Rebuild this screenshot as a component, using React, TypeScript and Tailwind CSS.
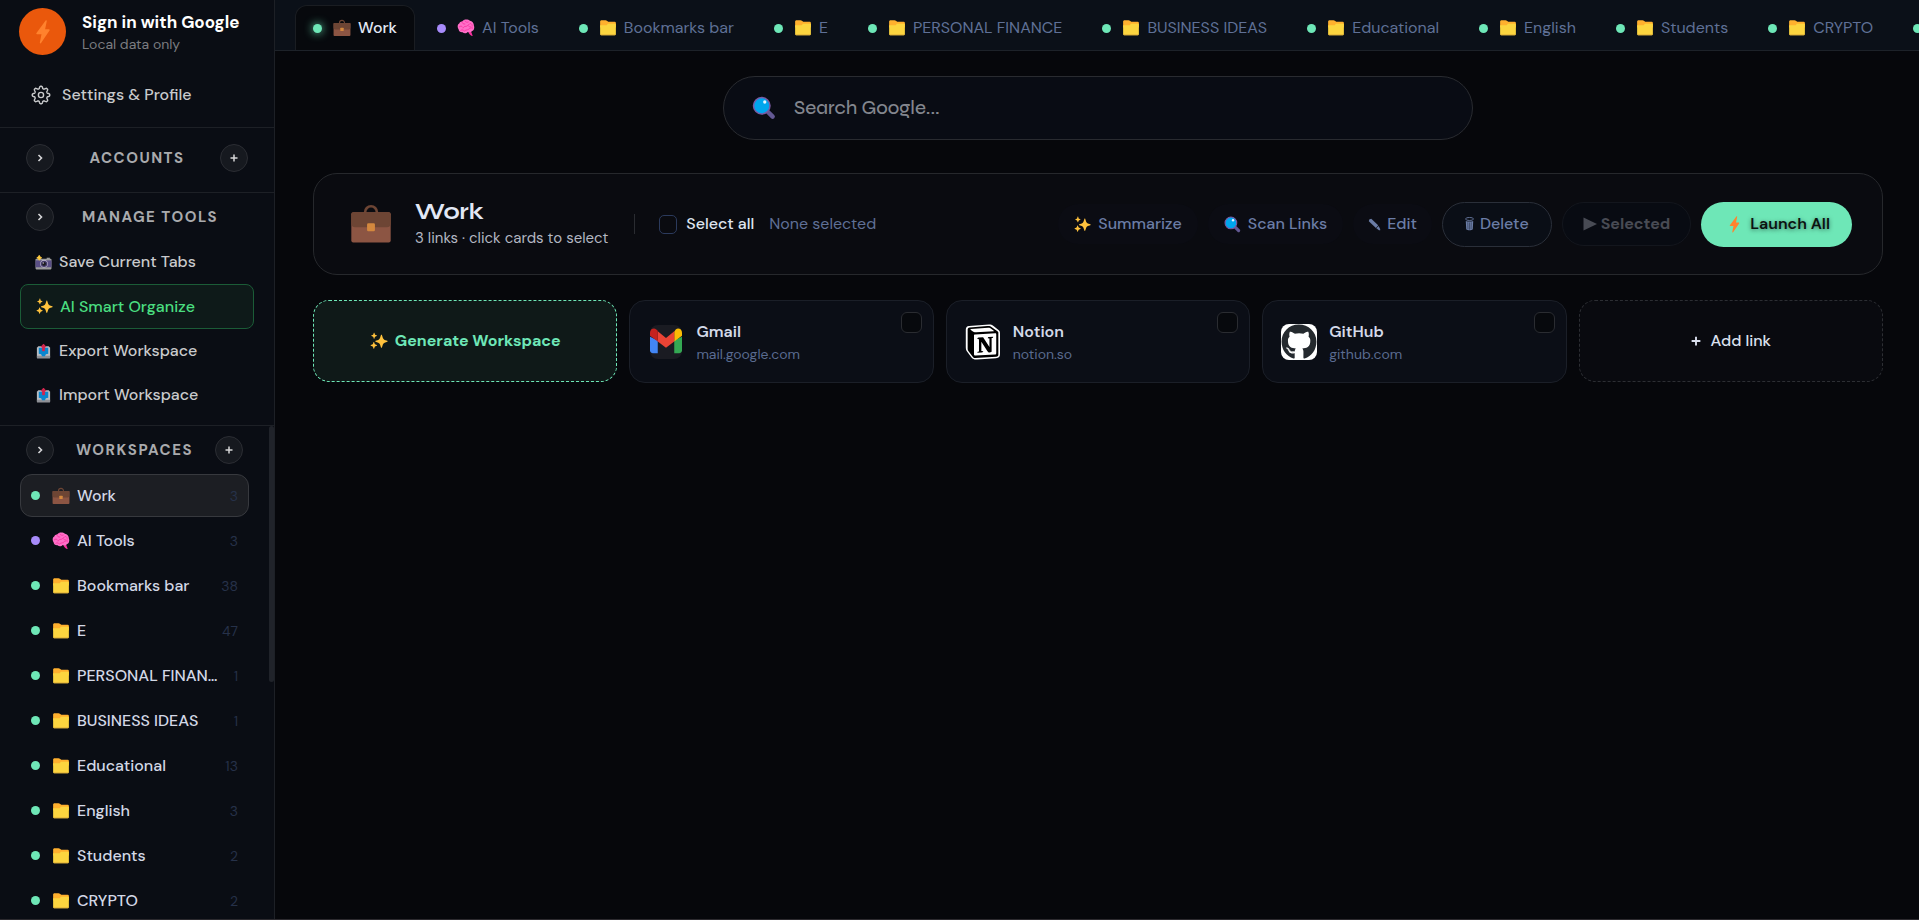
import { useState } from 'react';
import type { ReactNode } from 'react';
import { FaGithub } from 'react-icons/fa';
import { SiNotion } from 'react-icons/si';

interface IconProps {
  className?: string;
}

interface Workspace {
  id: string;
  name: string;
  count: number;
  icon: 'work' | 'brain' | 'folder';
  color?: 'violet';
}

const workspaces: Workspace[] = [
  { id: 'work', name: 'Work', count: 3, icon: 'work' },
  { id: 'ai', name: 'AI Tools', count: 3, icon: 'brain', color: 'violet' },
  { id: 'bookmarks', name: 'Bookmarks bar', count: 38, icon: 'folder' },
  { id: 'e', name: 'E', count: 47, icon: 'folder' },
  { id: 'finance', name: 'PERSONAL FINANCE', count: 1, icon: 'folder' },
  { id: 'business', name: 'BUSINESS IDEAS', count: 1, icon: 'folder' },
  { id: 'educational', name: 'Educational', count: 13, icon: 'folder' },
  { id: 'english', name: 'English', count: 3, icon: 'folder' },
  { id: 'students', name: 'Students', count: 2, icon: 'folder' },
  { id: 'crypto', name: 'CRYPTO', count: 2, icon: 'folder' },
  { id: 'news', name: 'News', count: 4, icon: 'folder' },
];

// Outline of an eight-toothed gear, sampled around the centre of a 20x20 box
const gearPath =
  Array.from({ length: 96 }, (_, i) => {
    const a = (i / 96) * Math.PI * 2;
    const r = 7.6 + 1.2 * Math.tanh(1.8 * Math.cos(a * 8));
    return `${i ? 'L' : 'M'}${(10 + r * Math.sin(a)).toFixed(2)} ${(10 - r * Math.cos(a)).toFixed(2)}`;
  }).join('') + 'Z';

const GearIcon = ({ className }: IconProps) => (
  <svg viewBox="0 0 20 20" className={className} fill="none" stroke="currentColor" strokeWidth="1.4" strokeLinejoin="round" aria-hidden="true">
    <path d={gearPath} />
    <circle cx="10" cy="10" r="2.6" />
  </svg>
);

const FolderIcon = ({ className }: IconProps) => (
  <svg viewBox="0 0 32 32" className={className} aria-hidden="true">
    <path d="M2 4.5C2 3.1 3.1 2 4.5 2h7.2c.9 0 1.7.3 2.3.9L16.5 5H28a2 2 0 0 1 2 2v8H2z" fill="#ffb02e" />
    <path d="M16 8.5 13.5 11H2v16a2 2 0 0 0 2 2h24a2 2 0 0 0 2-2V8.5z" fill="#fcd53f" />
    <path d="M2 27.5c.4.9 1.2 1.5 2 1.5h24c.9 0 1.7-.6 2-1.5z" fill="#d8a63a" />
  </svg>
);

const BriefcaseIcon = ({ className }: IconProps) => (
  <svg viewBox="0 0 32 32" className={className} aria-hidden="true">
    <path d="M11.5 7.5V7a4.5 4.5 0 0 1 9 0v.5" fill="none" stroke="#6d4534" strokeWidth="2" />
    <rect x="1" y="7" width="30" height="23" rx="1.5" fill="#8c5543" />
    <path d="M1 8.5C1 7.7 1.7 7 2.5 7h27c.8 0 1.5.7 1.5 1.5v7a3 3 0 0 1-3 3H4a3 3 0 0 1-3-3z" fill="#6d4534" />
    <rect x="13" y="15.5" width="6" height="6" rx="1" fill="#d3883e" />
  </svg>
);

const BrainIcon = ({ className }: IconProps) => (
  <svg viewBox="0 0 32 32" className={className} aria-hidden="true">
    <path d="M20 22h5l3 8c-3.5 0-6.5-3-8-8z" fill="#f92f9e" />
    <path d="M9 4.5C12-.5 20 0 23 3c4 .5 7.5 5 7 9 1.5 3 .5 8-3 9.500-2 2.5-6 2.5-8 1.5-2 3-7 3-9 .5-4 .5-7-2-7-5C0 15 1 9 4 8c.5-2 2.5-3.5 5-3.5z" fill="#ff6fc8" />
    <path d="M9 5c0 3 2.5 4.5 5 4M14 3.5c1 2 3.5 3 6 2M22 9c-3 1-3 4-6 4s-4 1-5 3M4 14c2-2.5 5-1.5 6 .5M24 8c2.5.5 3.5 2.5 3 5M28 16c-2-1-5 0-7 2-2.5 2-6 1-8 3.5M7 20c1.5-1 3-1 4.5 0M20 12c1 1.5 2 2 4 2" fill="none" stroke="#f92f9e" strokeWidth="1.4" strokeLinecap="round" />
  </svg>
);

const SparklesIcon = ({ className }: IconProps) => (
  <svg viewBox="0 0 32 32" className={className} aria-hidden="true">
    <g fill="#ffc23d">
      <path d="M19.5 5.5c.3-.9 1.4-.9 1.7 0l1.7 5.3a5 5 0 0 0 3.1 3.2l4.7 1.6c.9.3.9 1.5 0 1.8L26 19a5 5 0 0 0-3.1 3.2l-1.7 5.3c-.3.9-1.4.9-1.7 0l-1.7-5.3a5 5 0 0 0-3.1-3.2L10 17.4c-.9-.3-.9-1.5 0-1.8l4.7-1.6a5 5 0 0 0 3.1-3.2z" />
      <path d="M6.7 1.6c.2-.6 1-.6 1.2 0l.8 2.4a2 2 0 0 0 1.2 1.2l2 .7c.6.2.6 1 0 1.2l-2 .7A2 2 0 0 0 8.7 9l-.8 2.4c-.2.6-1 .6-1.2 0L5.9 9a2 2 0 0 0-1.2-1.2l-2-.7c-.6-.2-.6-1 0-1.2l2-.7A2 2 0 0 0 5.9 4z" />
      <path d="M6.2 18.2c.2-.7 1-.7 1.2 0l.9 2.6c.2.7.8 1.3 1.5 1.5l2.3.8c.7.2.7 1.1 0 1.3l-2.3.8c-.7.2-1.3.8-1.5 1.5l-.9 2.6c-.2.7-1 .7-1.2 0l-.9-2.6c-.2-.7-.8-1.3-1.5-1.5l-2.3-.8c-.7-.2-.7-1.1 0-1.3l2.3-.8c.7-.2 1.3-.8 1.5-1.5z" />
    </g>
  </svg>
);

const CameraIcon = ({ className }: IconProps) => (
  <svg viewBox="0 0 32 32" className={className} aria-hidden="true">
    <path d="M22 7h6v4h-6z" fill="#9b9b9b" />
    <rect x="1" y="9" width="30" height="20" rx="1.5" fill="#9b9b9b" />
    <path d="M1 12h30v13H1z" fill="#5a4f86" />
    <circle cx="17" cy="18.5" r="7" fill="#cdc4d6" />
    <circle cx="17" cy="18.5" r="6" fill="#433b6b" />
    <circle cx="17" cy="18.5" r="3.5" fill="#1c1c1c" />
    <circle cx="15.5" cy="17" r="1.3" fill="#cdc4d6" />
    <path d="m8 3 1.6 2.7L12 7l-2.4 1.6L8 11 6.4 8.6 4 7l2.4-1.6z" fill="#fcd53f" stroke="#fcc53f" strokeWidth="2" strokeLinejoin="round" />
  </svg>
);

const OutboxIcon = ({ className }: IconProps) => (
  <svg viewBox="-2 -1 36 34" className={className} aria-hidden="true">
    <path d="M5 5h22l3 3v20a2 2 0 0 1-2 2H4a2 2 0 0 1-2-2V8z" fill="#b9bcc2" />
    <path d="M2 25h28v4a2 2 0 0 1-2 2H4a2 2 0 0 1-2-2z" fill="#8e9096" />
    <path d="M6 8h20v13l-5 1-2 4h-6l-2-4-5-1z" fill="#0a86cf" />
    <path d="M16 0c.5 0 .9.2 1.2.5l4.3 4.8c.7.8.2 1.7-.8 1.7H19v7a1.5 1.5 0 0 1-1.5 1.5h-3A1.5 1.5 0 0 1 13 14V7h-1.7c-1 0-1.5-.9-.8-1.7L14.8.5c.3-.3.7-.5 1.2-.5z" fill="#d3264f" />
  </svg>
);

const SearchIcon = ({ className }: IconProps) => (
  <svg viewBox="0 0 32 32" className={className} aria-hidden="true">
    <path d="m20 20 7.5 7.5" stroke="#635994" strokeWidth="6" strokeLinecap="round" />
    <circle cx="13" cy="13" r="11" fill="#00a6ed" stroke="#7a5aa3" strokeWidth="2" />
    <circle cx="17" cy="8" r="2.2" fill="#e6f6ff" />
  </svg>
);

const BoltIcon = ({ className }: IconProps) => (
  <svg viewBox="0 0 20 32" className={className} aria-hidden="true">
    <path d="M13.5.8 1.3 17.2c-.5.8-.2 1.8.8 1.8H8L5.8 30c-.2 1.2.9 1.6 1.6.6L18.7 14c.5-.8.1-1.7-.8-1.7h-5.1L15 1.5c.3-1.1-.8-1.6-1.5-.7z" fill="#ff822d" />
  </svg>
);

const PencilIcon = ({ className }: IconProps) => (
  <svg viewBox="0 0 32 32" className={className} aria-hidden="true">
    <path d="M3 3.5 8 2l17 16-5.5 6.5L2 8z" fill="currentColor" />
    <path d="m26 19.5 4 7.5v3h-3l-6.5-4.5z" fill="currentColor" />
  </svg>
);

const TrashIcon = ({ className }: IconProps) => (
  <svg viewBox="0 0 20 32" className={className} aria-hidden="true">
    <ellipse cx="10" cy="4.5" rx="9" ry="3.5" fill="none" stroke="currentColor" strokeWidth="2" />
    <path d="M1.5 9c4 2 13 2 17 0l-1 19c-3 3-12 3-15 0z" fill="currentColor" />
    <path d="m6 12 .5 16M10 12.5V29M14 12l-.5 16" stroke="#0f1726" strokeWidth="1" />
  </svg>
);

const GmailLogo = () => (
  <svg viewBox="0 0 33 35" className="h-9 w-8" aria-hidden="true">
    <rect width="33" height="35" rx="8" fill="#1a1b22" />
    <path d="M0 12v14c0 1.7 1.3 3 3 3h5V16z" fill="#4285f4" />
    <path d="M33 12v14c0 1.7-1.3 3-3 3h-5V16z" fill="#34a853" />
    <path d="M25 7v10l8-6V8c0-4-4-5.5-6.5-3.5z" fill="#fbbc04" />
    <path d="M8 17V6.5l8.5 6.8L25 6.5V17l-8.5 6.5z" fill="#ea4335" />
    <path d="M0 8v3l8 6V6L6.5 4.5C4 2.5 0 4 0 8z" fill="#c5221f" />
  </svg>
);

const NotionLogo = () => (
  <span className="relative flex h-9 w-9 items-center justify-center">
    <svg viewBox="0 0 36 36" className="absolute inset-0" aria-hidden="true">
      <path d="M4 2 24 .5c2 0 3 .3 4.5 1.5l5 4C34.8 7 35 8 35 9.5V30c0 2.5-1 4-4 4.3L12 35.5c-2.5.2-4-.3-5.5-2L2 27.5C1 26 .8 25 .8 23V5.5C.8 3.5 2 2.2 4 2z" fill="#fff" />
    </svg>
    <SiNotion className="relative h-8 w-8 text-black" />
  </span>
);

const GithubLogo = () => (
  <span className="flex h-9 w-9 items-center justify-center overflow-hidden rounded-lg bg-white">
    <FaGithub className="h-9 w-9 shrink-0 text-[#24292e]" />
  </span>
);

const icons = { work: BriefcaseIcon, brain: BrainIcon, folder: FolderIcon };

const links = [
  { name: 'Gmail', host: 'mail.google.com', logo: <GmailLogo /> },
  { name: 'Notion', host: 'notion.so', logo: <NotionLogo /> },
  { name: 'GitHub', host: 'github.com', logo: <GithubLogo /> },
];

function RoundButton({ label, children }: { label: string; children: ReactNode }) {
  return (
    <button
      aria-label={label}
      className="flex h-7 w-7 shrink-0 items-center justify-center rounded-full border border-[#2b2d33] bg-[#16191f] text-[#d6d6d8]"
    >
      {children}
    </button>
  );
}

const Chevron = () => (
  <svg viewBox="0 0 10 10" className="h-2.5 w-2.5" fill="none" stroke="currentColor" strokeWidth="1.6" aria-hidden="true">
    <path d="m3.5 2 3 3-3 3" />
  </svg>
);

const Plus = ({ className = 'h-2 w-2' }: IconProps) => (
  <svg viewBox="0 0 8 8" className={className} fill="none" stroke="currentColor" strokeWidth="1.5" aria-hidden="true">
    <path d="M4 .5v7M.5 4h7" />
  </svg>
);

function SectionHeader({ title, addable }: { title: string; addable?: boolean }) {
  return (
    <div className="flex items-center justify-between">
      <RoundButton label={`Expand ${title.toLowerCase()}`}>
        <Chevron />
      </RoundButton>
      <h2 className="text-[15px] leading-5 font-bold tracking-widest text-[#a9aaad]">{title}</h2>
      {addable ? (
        <RoundButton label={`Add to ${title.toLowerCase()}`}>
          <Plus />
        </RoundButton>
      ) : (
        <span className="w-0.5" />
      )}
    </div>
  );
}

function Sidebar({ active, onSelect }: { active: string; onSelect: (id: string) => void }) {
  return (
    <aside className="flex w-[275px] shrink-0 flex-col border-r border-[#1d2026] bg-[#0a0d14]">
      <div className="border-b border-[#1d2026] pt-2 pb-2">
        <div className="flex items-center gap-4 px-[19px]">
          <span className="flex h-[47px] w-[47px] items-center justify-center rounded-full bg-[#ea580c]">
            <BoltIcon className="h-6 w-4" />
          </span>
          <div>
            <a href="#signin" className="block text-[17px] leading-6 font-bold text-white">
              Sign in with Google
            </a>
            <p className="text-sm leading-5 text-[#7b7c80]">Local data only</p>
          </div>
        </div>
        <a href="#settings" className="mt-4 flex h-12 items-center gap-[11px] px-[31px] text-base font-medium text-[#c9cacc]">
          <GearIcon className="h-5 w-5" />
          Settings &amp; Profile
        </a>
      </div>

      <div className="border-b border-[#1d2026] px-[26px] pt-4 pb-5">
        <SectionHeader title="ACCOUNTS" addable />
      </div>

      <div className="border-b border-[#1d2026] pt-[10px] pb-2">
        <div className="px-[26px]">
          <SectionHeader title="MANAGE TOOLS" />
        </div>
        <div className="mt-[9px] flex flex-col px-5 text-base font-medium text-[#c9cacc]">
          <button className="flex h-11 items-center gap-[7px] px-[15px]">
            <CameraIcon className="h-[17px] w-[17px]" />
            Save Current Tabs
          </button>
          <button className="flex h-[45px] items-center gap-[7px] rounded-lg border border-[#1b5c37] bg-[#0e1a19] px-[15px] text-[#4ade80]">
            <SparklesIcon className="h-[17px] w-[17px]" />
            AI Smart Organize
          </button>
          <button className="flex h-11 items-center gap-[7px] px-[15px]">
            <OutboxIcon className="h-[17px] w-[17px]" />
            Export Workspace
          </button>
          <button className="flex h-11 items-center gap-[7px] px-[15px]">
            <OutboxIcon className="h-[17px] w-[17px]" />
            Import Workspace
          </button>
        </div>
      </div>

      <div className="relative min-h-0 flex-1 overflow-hidden pr-[5px]">
        <div className="px-[26px] pt-[10px]">
          <SectionHeader title="WORKSPACES" addable />
        </div>
        <ul className="mt-[10px] flex flex-col gap-0.5 px-5">
          {workspaces.map((ws) => {
            const Icon = icons[ws.icon];
            return (
              <li key={ws.id}>
                <button
                  onClick={() => onSelect(ws.id)}
                  className={`flex h-[43px] w-full items-center rounded-xl border px-[10px] text-left ${
                    active === ws.id ? 'border-[#37393e] bg-[#1c1e23]' : 'border-transparent'
                  }`}
                >
                  <span
                    className={`h-[9px] w-[9px] shrink-0 rounded-full ${
                      ws.color === 'violet' ? 'bg-[#a78bfa]' : 'bg-[#6ee7b7]'
                    }`}
                  />
                  <Icon className="ml-3 h-[18px] w-[18px] shrink-0" />
                  <span className="ml-[7px] flex-1 truncate text-base font-medium text-[#d3d8e6]">{ws.name}</span>
                  <span className="ml-2 shrink-0 text-sm text-[#263149]">{ws.count}</span>
                </button>
              </li>
            );
          })}
        </ul>
        {/* Scroll thumb */}
        <div className="absolute top-0 right-0 h-[52%] w-[5px] rounded-full bg-[#20232a]" />
      </div>
    </aside>
  );
}

function TabBar({ active, onSelect }: { active: string; onSelect: (id: string) => void }) {
  return (
    <nav className="flex h-[51px] shrink-0 items-end gap-1 overflow-hidden border-b border-[#1d2229] bg-[#0b1018] pl-5">
      {workspaces.map((ws) => {
        const Icon = icons[ws.icon];
        const isActive = active === ws.id;
        return (
          <button
            key={ws.id}
            onClick={() => onSelect(ws.id)}
            className={`flex h-[45px] shrink-0 items-center rounded-t-xl border border-b-0 px-[17px] text-base ${
              isActive
                ? 'border-[#1a1d22] bg-[#07090d] font-medium text-[#e2e8f5]'
                : 'border-transparent text-[#5f7096]'
            }`}
          >
            <span
              className={`h-[9px] w-[9px] rounded-full ${ws.color === 'violet' ? 'bg-[#a78bfa]' : 'bg-[#6ee7b7]'} ${
                isActive ? 'shadow-[0_0_10px_#6ee7b7]' : ''
              }`}
            />
            <Icon className="ml-[11px] h-[18px] w-[18px]" />
            <span className="ml-[7px] whitespace-nowrap">{ws.name}</span>
          </button>
        );
      })}
    </nav>
  );
}

function WorkspaceHeader() {
  return (
    <section className="mt-[33px] flex h-[102px] items-center rounded-3xl border border-[#26282c] bg-[#0a0b10] pr-[30px] pl-9">
      <BriefcaseIcon className="h-[42px] w-[42px]" />
      <div className="ml-[23px]">
        <h1 className="font-['Syne','DM_Sans',Inter,sans-serif] text-[23px] leading-7 font-bold text-[#e2e8f5]">Work</h1>
        <p className="text-[15px] leading-6 text-[#b3b7c2]">3 links · click cards to select</p>
      </div>
      <span className="ml-[26px] h-5 w-px bg-[#2a2c31]" />
      <label className="ml-6 flex items-center gap-[9px] text-base font-medium text-[#dfe4ef]">
        <input type="checkbox" className="h-[19px] w-[18px] appearance-none rounded-[5px] border border-[#2b3a5c]" />
        Select all
      </label>
      <span className="ml-[15px] text-base text-[#5f7096]">None selected</span>

      <div className="ml-auto flex items-center gap-[10px] text-base font-medium text-[#6b7da6]">
        <button className="flex h-10 items-center gap-[7px] rounded-full bg-[#0b0c13] px-4">
          <SparklesIcon className="h-[17px] w-[17px]" />
          Summarize
        </button>
        <button className="flex h-10 items-center gap-[7px] rounded-full bg-[#0b0c13] px-4">
          <SearchIcon className="h-[17px] w-[17px]" />
          Scan Links
        </button>
        <button className="flex h-10 items-center gap-1.5 rounded-full bg-[#0b0c13] px-[15px]">
          <PencilIcon className="h-[13px] w-[13px]" />
          Edit
        </button>
        <button className="flex h-[45px] items-center gap-1.5 rounded-full border border-[#2a2f39] bg-[#0a0e16] px-[22px]">
          <TrashIcon className="h-[14px] w-[9px]" />
          Delete
        </button>
        <button
          disabled
          className="flex h-11 items-center gap-1 rounded-full border border-[#13161d] bg-[#080b12] px-5 font-bold text-[#484b54]"
        >
          <svg viewBox="0 0 14 14" className="h-[14px] w-[14px]" aria-hidden="true">
            <path d="M.5.5v13L14 7z" fill="currentColor" />
          </svg>
          Selected
        </button>
        <button className="flex h-[45px] items-center gap-[10px] rounded-full bg-[#6ee7b7] pr-[22px] pl-7 font-semibold text-[#0b1210] [text-shadow:0_1px_4px_rgb(0_0_0/0.5)]">
          <BoltIcon className="h-[17px] w-[11px]" />
          Launch All
        </button>
      </div>
    </section>
  );
}

function LinkCard({ name, host, logo }: { name: string; host: string; logo: ReactNode }) {
  return (
    <div className="relative flex h-[83px] items-center rounded-2xl border border-[#1b1f28] bg-[#0b0e16] pl-[18px]">
      <div className="flex w-9 justify-center">{logo}</div>
      <div className="ml-3">
        <a href={`https://${host}`} className="block text-base leading-6 font-semibold text-[#d3d9e8]">
          {name}
        </a>
        <p className="text-sm leading-5 text-[#5a6b90]">{host}</p>
      </div>
      <input
        type="checkbox"
        aria-label={`Select ${name}`}
        className="absolute top-[11px] right-[11px] h-[21px] w-[21px] appearance-none rounded-md border border-[#2a2c31] bg-[#07090d]"
      />
    </div>
  );
}

export default function App() {
  const [active, setActive] = useState('work');

  return (
    <div className="flex h-screen w-full overflow-hidden border-b border-[#2c2a2f] bg-[#06070b] font-['DM_Sans',Inter,'Liberation_Sans',sans-serif]">
      <Sidebar active={active} onSelect={setActive} />
      <div className="flex min-w-0 flex-1 flex-col">
        <TabBar active={active} onSelect={setActive} />
        <main className="flex-1 pt-[25px] pr-9 pl-[38px]">
          {/* Search */}
          <label className="mx-auto flex h-16 max-w-[750px] items-center gap-[18px] rounded-full border border-[#292b30] bg-[#090c14] px-7">
            <SearchIcon className="h-6 w-6" />
            <input
              type="text"
              aria-label="Search Google"
              placeholder="Search Google..."
              className="min-w-0 flex-1 bg-transparent font-['Syne','DM_Sans',Inter,sans-serif] text-[19px] font-medium text-white outline-none placeholder:text-[#83868e]"
            />
          </label>

          <WorkspaceHeader />

          {/* Link cards */}
          <div className="mt-[25px] grid grid-cols-5 gap-3">
            <button className="flex h-[82px] items-center justify-center gap-[7px] rounded-2xl border border-dashed border-[#6ee7b7] bg-[#0f1918] text-base font-bold text-[#6ee7b7]">
              <SparklesIcon className="h-[18px] w-[18px]" />
              Generate Workspace
            </button>
            {links.map((link) => (
              <LinkCard key={link.name} {...link} />
            ))}
            <button className="flex h-[82px] items-center justify-center gap-[10px] rounded-2xl border border-dashed border-[#2c2e33] bg-[#090a0f] text-base font-medium text-[#dbe0ee]">
              <Plus className="h-[10px] w-[10px]" />
              Add link
            </button>
          </div>
        </main>
      </div>
    </div>
  );
}
